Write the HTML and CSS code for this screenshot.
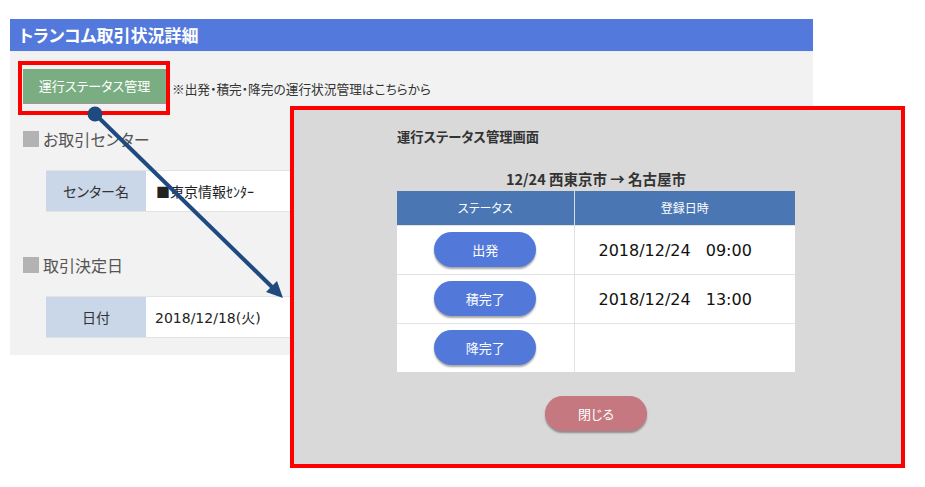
FILE: index.html
```html
<!DOCTYPE html>
<html lang="ja">
<head>
<meta charset="utf-8">
<title>トランコム取引状況詳細</title>
<link rel="stylesheet" href="styles.css">
</head>
<body>
<div class="page">
  <div class="screen">
    <header class="title-bar">トランコム取引状況詳細</header>
    <div class="panel">
      <div class="action-row">
        <div class="highlight"><button class="btn-status">運行ステータス管理</button></div>
        <span class="note">※出発・積完・降完の運行状況管理はこちらから</span>
      </div>
      <section class="block">
        <h2 class="block-title"><span class="sq"></span>お取引センター</h2>
        <div class="info-row"><div class="label">センター名</div><div class="value">■東京情報ｾﾝﾀｰ</div></div>
      </section>
      <section class="block block-2">
        <h2 class="block-title"><span class="sq"></span>取引決定日</h2>
        <div class="info-row"><div class="label">日付</div><div class="value num">2018/12/18(火)</div></div>
      </section>
    </div>
  </div>

  <div class="modal">
    <div class="modal-inner">
      <h3 class="modal-title">運行ステータス管理画面</h3>
      <div class="route">12/24 西東京市 → 名古屋市</div>
      <table class="status-table">
        <thead>
          <tr><th class="c1">ステータス</th><th class="c2">登録日時</th></tr>
        </thead>
        <tbody>
          <tr><td class="c1"><button class="pill">出発</button></td><td class="c2 date">2018/12/24<span class="gap"></span>09:00</td></tr>
          <tr><td class="c1"><button class="pill">積完了</button></td><td class="c2 date">2018/12/24<span class="gap"></span>13:00</td></tr>
          <tr><td class="c1"><button class="pill">降完了</button></td><td class="c2 date"></td></tr>
        </tbody>
      </table>
      <div class="close-row"><button class="pill pill-close">閉じる</button></div>
    </div>
  </div>

  <svg class="arrow" width="925" height="487" viewBox="0 0 925 487" aria-hidden="true">
    <line x1="95" y1="114" x2="272" y2="287" stroke="#1f4a80" stroke-width="4"/>
    <circle cx="95" cy="114" r="7.5" fill="#1f4a80"/>
    <polygon points="283,298 277,281 266,292" fill="#1f4a80"/>
  </svg>
</div>
</body>
</html>
```

FILE: styles.css
```css
* { box-sizing: border-box; }
html, body { margin: 0; padding: 0; background: #ffffff; }
body {
  font-family: "Noto Sans CJK JP", "Noto Sans", sans-serif;
  font-feature-settings: "palt";
  color: #333;
}
.page { position: relative; width: 925px; height: 487px; overflow: hidden; }

.screen { margin: 19px 0 0 10px; width: 803px; }
.title-bar {
  height: 33px;
  background: #5379dc;
  border-bottom: 1px solid #e9edf5;
  color: #fff;
  font-weight: 700;
  font-size: 17px;
  line-height: 31px;
  padding-left: 9px;
}
.panel {
  background: #f2f2f2;
  height: 303px;
  padding-top: 9px;
}
.action-row { display: flex; align-items: center; margin-left: 8px; }
.highlight {
  border: 4px solid #ff0000;
  padding: 4px 0 7px 1px;
  width: 152px;
  height: 54px;
}
.btn-status {
  display: block;
  width: 143px;
  height: 35px;
  border: none;
  background: #7aad81;
  border-bottom: 2px solid #8fa092;
  color: #fff;
  font-family: inherit;
  font-feature-settings: "palt";
  font-size: 13px;
  padding: 0;
}
.note { margin-left: 2px; font-size: 12.7px; color: #333; }

.block { margin-left: 13px; margin-top: 12px; }
.block-2 { margin-top: 41px; }
.block-title {
  display: flex;
  align-items: center;
  height: 24px;
  margin: 0 0 19px 0;
  font-size: 16px;
  font-weight: 400;
  color: #555;
}
.sq { width: 16px; height: 16px; background: #b3b3b3; margin-right: 4px; }
.info-row {
  display: flex;
  margin-left: 23px;
  width: 740px;
  height: 42px;
  border-top: 1px solid #e3e3e3;
  border-bottom: 1px solid #e3e3e3;
  background: #fff;
}
.label {
  width: 100px;
  background: #cad7e9;
  display: flex; align-items: center; justify-content: center;
  font-size: 14px; color: #333;
}
.value {
  display: flex; align-items: center;
  padding-left: 10px;
  font-size: 14px; color: #222;
}
.value.num { font-family: "DejaVu Sans", "Noto Sans CJK JP", sans-serif; font-size: 14px; padding-left: 9px; }

.modal {
  position: absolute;
  left: 290px; top: 106px;
  width: 615px; height: 362px;
  border: 4px solid #ff0000;
  background: #d9d9d9;
}
.modal-inner { padding: 17px 0 0 103px; width: 501px; }
.modal-title {
  margin: 0;
  height: 20px; line-height: 20px;
  font-size: 13.3px; font-weight: 700; color: #333;
}
.route {
  margin-top: 22px;
  height: 20px; line-height: 20px;
  text-align: center;
  font-size: 14.5px; font-weight: 700; color: #333;
}
.status-table {
  margin-top: 2px;
  width: 398px;
  border-collapse: collapse;
  background: #fff;
}
.status-table th {
  height: 34px;
  background: #4a77b4;
  color: #fff;
  font-weight: 400;
  font-size: 12px;
  padding: 0;
}
.status-table th.c1 { border-right: 1px solid #d6deea; }
.status-table td { height: 49px; padding: 0; border-top: 1px solid #e2e2e2; }
.status-table td.c1 { width: 177px; text-align: center; border-right: 1px solid #e2e2e2; }
.status-table td.date {
  padding: 2px 0 0 24px;
  font-family: "DejaVu Sans", sans-serif;
  font-size: 16px;
  color: #111;
}
.gap { display: inline-block; width: 15px; }
.pill {
  width: 102px; height: 35px;
  border: none;
  border-radius: 18px;
  background: #5279da;
  color: #fff;
  font-family: inherit;
  font-feature-settings: "palt";
  font-size: 13px;
  box-shadow: 0 2px 2px rgba(0,0,0,0.35);
  padding: 0;
  vertical-align: middle;
}
.close-row { width: 398px; margin-top: 24px; text-align: center; }
.pill-close { background: #c5787f; }

.arrow { position: absolute; left: 0; top: 0; pointer-events: none; }
```
